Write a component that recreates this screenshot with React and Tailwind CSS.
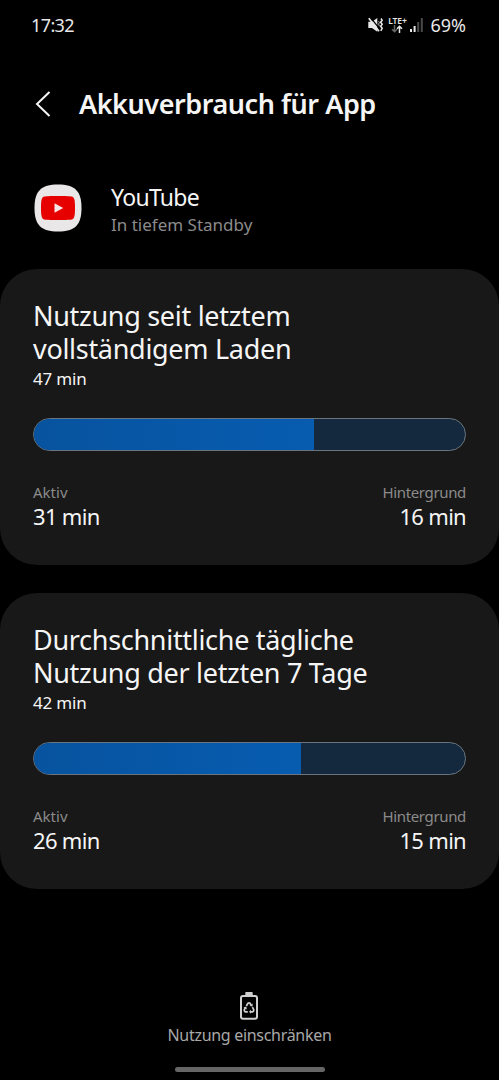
import React from 'react';

const usageStats = [
  {
    title: 'Nutzung seit letztem vollständigem Laden',
    total: '47 min',
    active: '31 min',
    background: '16 min',
    percent: 65,
  },
  {
    title: 'Durchschnittliche tägliche Nutzung der letzten 7 Tage',
    total: '42 min',
    active: '26 min',
    background: '15 min',
    percent: 62,
  },
];

const StatusBar = () => (
  <div className="flex h-[49px] items-center justify-between pl-[31px] pr-[33px] text-[#e8e8e8]">
    <span className="text-[18px] leading-6 tracking-[-0.6px]">17:32</span>
    <div className="flex items-center">
      {/* Muted speaker with vibration */}
      <svg className="mr-[5px] h-[16px] w-[15px]" viewBox="0 0 15 16" fill="none">
        <path d="M0.3 4.8H4L9.3 1V14.8L4 11H0.3Z" fill="currentColor" />
        <path d="M2.6 0.6L11.8 12.2" stroke="#000" strokeWidth="1.3" />
        <path d="M0.8 1.2L11 14.2" stroke="currentColor" strokeWidth="1.7" />
        <path d="M13 1.5L14.2 3.3L12.6 5.2L14.2 7.2L12.6 9.2L14.2 11.2L12.8 13.8" stroke="currentColor" strokeWidth="1.5" />
        <path d="M10.6 4.2L11.4 5.6L10.6 7.2L11.4 9" stroke="currentColor" strokeWidth="0.8" />
      </svg>
      <div className="mr-[4px] flex w-[18px] flex-col items-center">
        <span className="text-[8.5px] font-semibold leading-[9px] tracking-[-0.1px]">LTE+</span>
        <svg className="h-[8px] w-[12px]" viewBox="0 0 12 8" fill="none" strokeWidth="1.5">
          <path d="M3.5 0V6.5M1 4.3L3.5 6.8L6 4.3" stroke="#666" />
          <path d="M8.5 8V1.5M6 3.7L8.5 1.2L11 3.7" stroke="currentColor" />
        </svg>
      </div>
      <svg className="mr-[7px] h-[14px] w-[13px]" viewBox="0 0 13 14">
        <rect x="0" y="11" width="2" height="3" fill="currentColor" />
        <rect x="3.6" y="8" width="2" height="6" fill="currentColor" />
        <rect x="7.2" y="4" width="2" height="10" fill="#4a4a4a" />
        <rect x="10.8" y="0" width="2" height="14" fill="#4a4a4a" />
      </svg>
      <span className="text-[18px] leading-6">69%</span>
    </div>
  </div>
);

const YouTubeIcon = () => (
  <svg className="h-[48px] w-[48px]" viewBox="0 0 48 48">
    <path d="M24 0.5C41 0.5 47.5 7 47.5 24S41 47.5 24 47.5S0.5 41 0.5 24S7 0.5 24 0.5Z" fill="#e9e7e7" />
    <path d="M24 12C32 12 37 12.2 38.5 12.8C40.5 13.8 41 17 41 24S40.5 34.2 38.5 35.2C37 35.8 32 36 24 36S11 35.8 9.5 35.2C7.5 34.2 7 31 7 24S7.5 13.8 9.5 12.8C11 12.2 16 12 24 12Z" fill="#e60000" />
    <path d="M20.5 19.3V28.7L29.2 24Z" fill="#f4e6e6" />
  </svg>
);

const UsageCard = ({ title, total, active, background, percent }) => (
  <section className="h-[296px] rounded-[37px] bg-[#181818] px-[33px] pt-[30px]">
    <h2 className="w-[350px] text-[27px] leading-[33px] tracking-[-0.3px] text-[#f5f5f5]">{title}</h2>
    <p className="mt-px text-[17px] leading-[25px] tracking-[-0.2px] text-[#f5f5f5]">{total}</p>
    <div className="mt-[27px] h-[33px] overflow-hidden rounded-full border border-[#697681] bg-[#14293d]">
      <div
        className="h-full bg-gradient-to-r from-[#07539f] to-[#075cb0]"
        style={{ width: `${percent}%` }}
      />
    </div>
    <div className="mt-[30px] flex justify-between">
      <div>
        <p className="text-[15px] leading-[22px] text-[#8b8b8b]">Aktiv</p>
        <p className="text-[22px] leading-[27px] tracking-[-0.7px] text-[#f5f5f5]">{active}</p>
      </div>
      <div className="text-right">
        <p className="text-[15px] leading-[22px] tracking-[-0.35px] text-[#8b8b8b]">Hintergrund</p>
        <p className="text-[22px] leading-[27px] tracking-[-0.7px] text-[#f5f5f5]">{background}</p>
      </div>
    </div>
  </section>
);

const BatteryRecycleIcon = () => (
  <svg className="h-[28px] w-[20px]" viewBox="0 0 20 28" fill="none">
    <rect x="6.3" y="0" width="7.4" height="4" rx="0.8" fill="#d0d0d0" />
    <rect x="2" y="4" width="16" height="22.8" rx="2" stroke="#d0d0d0" strokeWidth="2" />
    {/* Three arrows chasing round a triangle */}
    <g stroke="#d0d0d0" strokeWidth="1.7" strokeLinejoin="round">
      <path d="M7.3 14L9 11.2Q10 10.4 11 11.2L12.2 13.2" />
      <path d="M13.4 15.2L14.8 17.8Q14.9 19.6 13.4 19.8H11.4" />
      <path d="M8.8 19.8H6.6Q5.1 19.6 5.2 17.8L6.2 16" />
    </g>
    <path d="M13.6 11.6V14.6L10.6 14ZM12 17.8V21.8L10 19.8ZM4.4 15.6L7.4 14.6L7.8 17.4Z" fill="#d0d0d0" />
  </svg>
);

const App = () => {
  return (
    <div className="flex h-[1080px] w-[499px] flex-col overflow-hidden bg-black font-['Noto_Sans',sans-serif]">
      <StatusBar />

      <header className="flex h-[110px] items-center pl-[35px]">
        <svg className="h-[26px] w-[16px]" viewBox="0 0 16 26" fill="none">
          <path d="M14.5 1L2 13L14.5 25" stroke="#f5f5f5" strokeWidth="2" />
        </svg>
        <h1 className="ml-[28px] whitespace-nowrap text-[27px] font-semibold leading-8 tracking-[-0.45px] text-[#f5f5f5]">
          Akkuverbrauch für App
        </h1>
      </header>

      <div className="flex h-[110px] items-start pl-[34px] pt-[25px]">
        <YouTubeIcon />
        <div className="ml-[29px]">
          <p className="text-[23px] leading-[27px] tracking-[-0.7px] text-[#f5f5f5]">YouTube</p>
          <p className="mt-px text-[17px] leading-[26px] text-[#8b8b8b]">In tiefem Standby</p>
        </div>
      </div>

      <main className="flex flex-col gap-7">
        {usageStats.map((stat) => (
          <UsageCard key={stat.total} {...stat} />
        ))}
      </main>

      <footer className="mt-auto flex flex-col items-center">
        <button className="flex flex-col items-center gap-[3px] text-[16px] leading-6 tracking-[-0.3px] text-[#a8a8a8]" type="button">
          <BatteryRecycleIcon />
          Nutzung einschränken
        </button>
        {/* Gesture bar */}
        <div className="mb-[8px] mt-[20px] h-[5px] w-[150px] rounded-full bg-[#666]" />
      </footer>
    </div>
  );
};

export default App;
